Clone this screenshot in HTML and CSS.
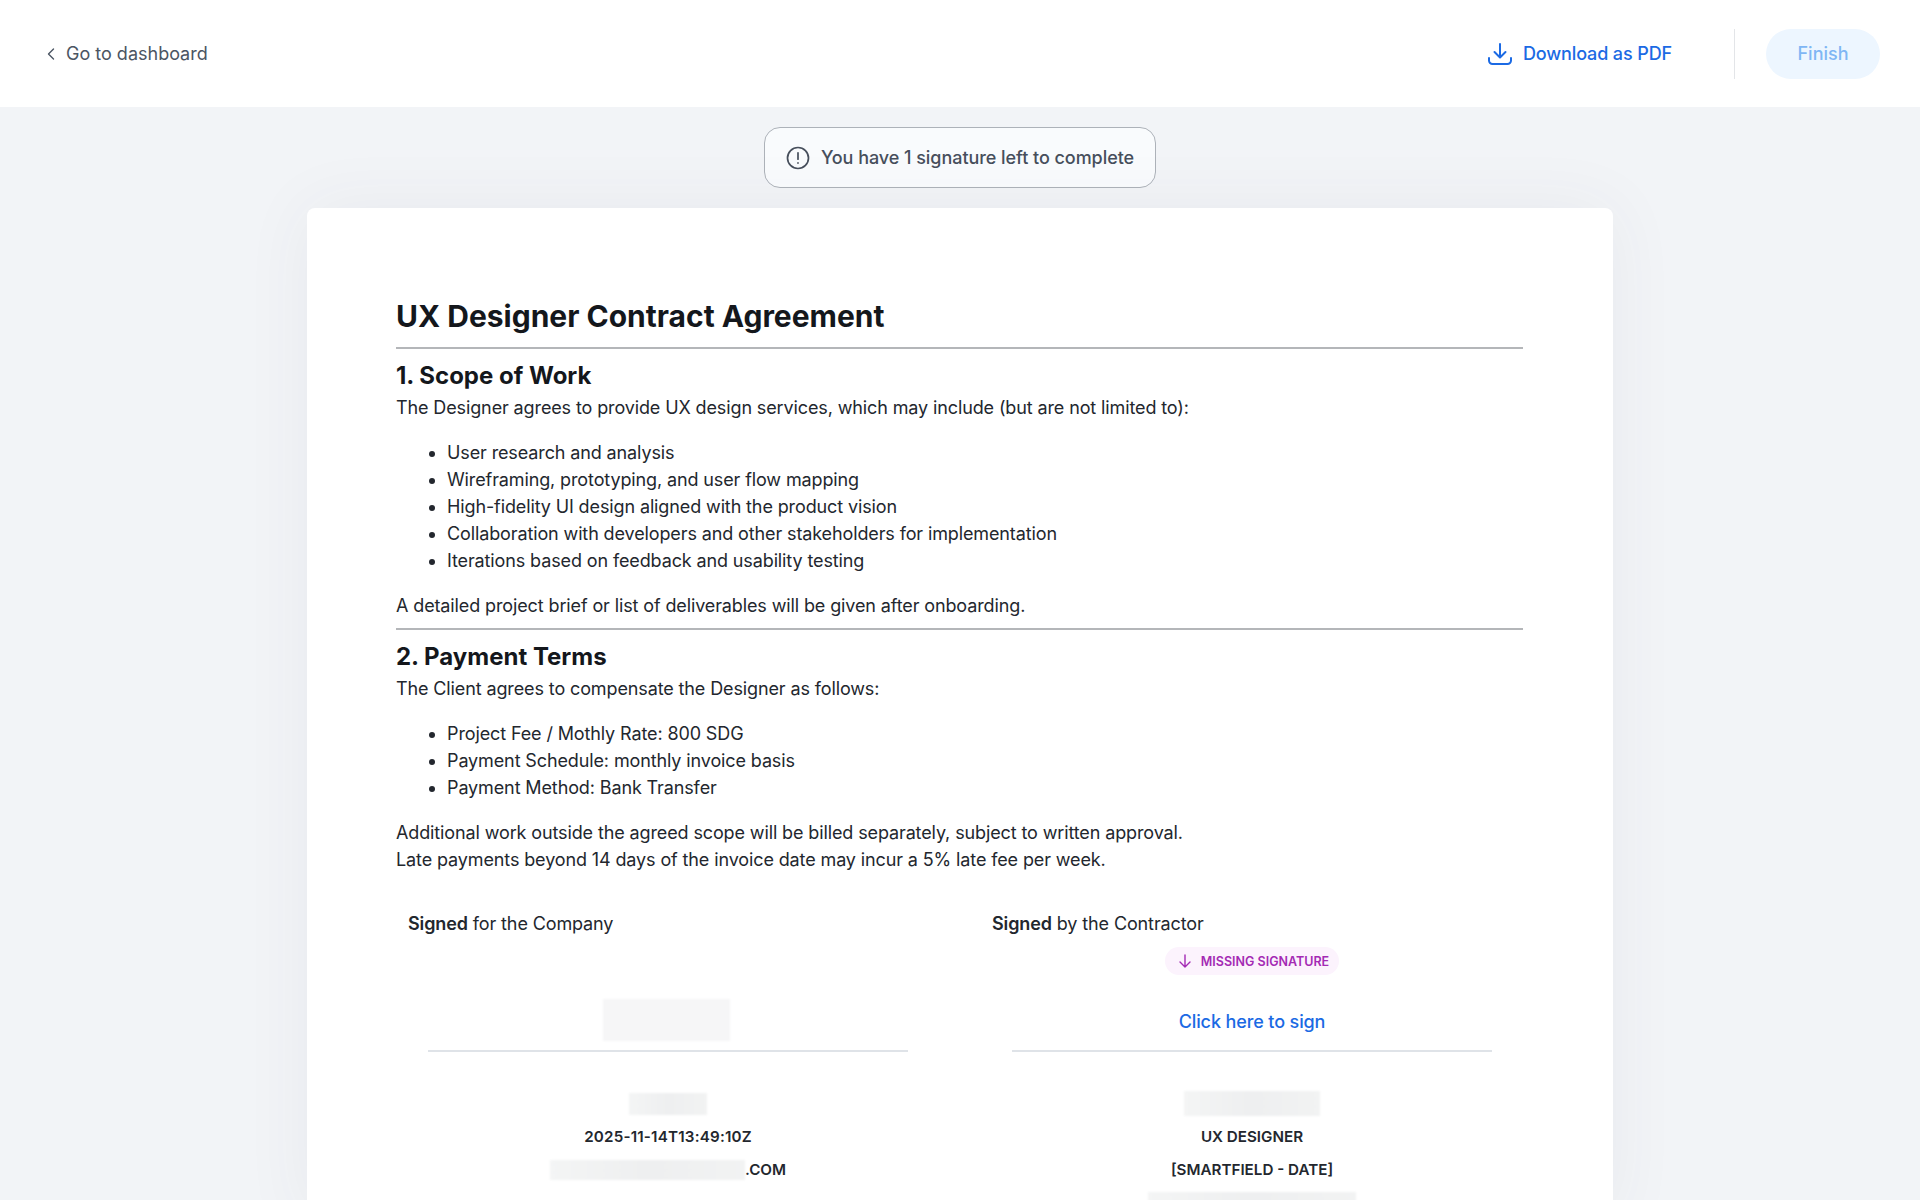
FILE: index.html

```html
<!DOCTYPE html>
<html lang="en">
<head>
  <meta charset="UTF-8" />
  <meta name="viewport" content="width=device-width, initial-scale=1.0"/>
  <title>UX Designer Contract Agreement</title>
  <link rel="stylesheet" href="styles.css">
</head>
<body>
<header class="topbar">
  <a class="back-link" href="#">
    <svg class="back-icon" viewBox="0 0 10 14" width="10" height="14" fill="none" stroke="currentColor" stroke-width="1.4" stroke-linecap="round" stroke-linejoin="round"><path d="M7.5 2 2.5 7l5 5"/></svg>
    Go to dashboard
  </a>
  <div class="topbar-actions">
    <a class="download-link" href="#">
      <svg viewBox="0 0 26 24" width="26" height="24" fill="none" stroke="currentColor" stroke-width="2" stroke-linecap="round" stroke-linejoin="round"><path d="M13 2v13M7.5 10l5.5 5.500 5.500-5.500M2 16v2.500A3.500 3.500 0 0 0 5.500 22h15a3.500 3.500 0 0 0 3.500-3.500V16"/></svg>
      Download as PDF
    </a>
    <span class="divider"></span>
    <button class="finish-btn">Finish</button>
  </div>
</header>

<main class="page">
  <div class="notice">
    <svg viewBox="0 0 24 24" width="24" height="24" fill="none" stroke="currentColor" stroke-width="1.700" stroke-linecap="round"><circle cx="12" cy="12" r="10.500"/><path d="M12 6.800v6.400M12 16.900v.2"/></svg>
    You have 1 signature left to complete
  </div>

  <article class="sheet">
    <h1>UX Designer Contract Agreement</h1>
    <hr>
    <h2>1. Scope of Work</h2>
    <p>The Designer agrees to provide UX design services, which may include (but are not limited to):</p>
    <ul>
      <li>User research and analysis</li>
      <li>Wireframing, prototyping, and user flow mapping</li>
      <li>High-fidelity UI design aligned with the product vision</li>
      <li>Collaboration with developers and other stakeholders for implementation</li>
      <li>Iterations based on feedback and usability testing</li>
    </ul>
    <p>A detailed project brief or list of deliverables will be given after onboarding.</p>
    <hr>
    <h2>2. Payment Terms</h2>
    <p>The Client agrees to compensate the Designer as follows:</p>
    <ul>
      <li>Project Fee / Mothly Rate: 800 SDG</li>
      <li>Payment Schedule: monthly invoice basis</li>
      <li>Payment Method: Bank Transfer</li>
    </ul>
    <p>Additional work outside the agreed scope will be billed separately, subject to written approval.<br>Late payments beyond 14 days of the invoice date may incur a 5% late fee per week.</p>

    <section class="signatures">
      <div class="sign-col">
        <div class="sign-title"><strong>Signed</strong> for the Company</div>
        <div class="sign-box">
          <span class="blur blur-sig"></span>
        </div>
        <div class="sign-meta">
          <div class="meta-row"><span class="blur blur-name"></span></div>
          <div class="meta-row meta-date">2025-11-14T13:49:10Z</div>
          <div class="meta-row"><span class="blur blur-mail"></span>.COM</div>
        </div>
      </div>
      <div class="sign-col">
        <div class="sign-title"><strong>Signed</strong> by the Contractor</div>
        <div class="sign-box">
          <span class="missing">
            <svg viewBox="0 0 16 16" width="16" height="16" fill="none" stroke="currentColor" stroke-width="1.400" stroke-linecap="round" stroke-linejoin="round"><path d="M8 2v12M3 9l5 5 5-5"/></svg>
            MISSING SIGNATURE
          </span>
          <a class="sign-link" href="#">Click here to sign</a>
        </div>
        <div class="sign-meta">
          <div class="meta-row"><span class="blur blur-title"></span></div>
          <div class="meta-row">UX DESIGNER</div>
          <div class="meta-row">[SMARTFIELD - DATE]</div>
          <div class="meta-row"><span class="blur blur-mail2"></span></div>
        </div>
      </div>
    </section>
  </article>
</main>
</body>
</html>
```

FILE: styles.css

```css
* {
  box-sizing: border-box;
}
html, body {
  height: 100%;
}
body {
  margin: 0;
  display: flex;
  flex-direction: column;
  overflow: hidden;
  font-family: Inter, "Liberation Sans", sans-serif;
  font-size: 18px;
  line-height: 27px;
  letter-spacing: -0.12px;
  color: #23272e;
  background: #f2f4f7;
}
a {
  text-decoration: none;
}

/* top bar */
.topbar {
  flex: none;
  height: 107px;
  display: flex;
  align-items: center;
  justify-content: space-between;
  padding: 0 40px 0 46px;
  background: #fff;
}
.back-link {
  display: flex;
  align-items: center;
  gap: 10px;
  letter-spacing: 0;
  color: #4b5563;
}
.topbar-actions {
  display: flex;
  align-items: center;
}
.download-link {
  display: flex;
  align-items: center;
  gap: 10px;
  font-weight: 500;
  color: #1b6ae4;
}
.divider {
  width: 1px;
  height: 50px;
  margin: 0 31px 0 62px;
  background: #e3e5e8;
}
.finish-btn {
  width: 114px;
  height: 50px;
  border: 0;
  border-radius: 25px;
  background: #edf6ff;
  color: #7fb6f4;
  font: 500 18px Inter, sans-serif;
}

/* page */
.page {
  flex: 1;
  min-height: 0;
  display: flex;
  flex-direction: column;
  align-items: center;
  padding-top: 20px;
}
.notice {
  flex: none;
  width: 392px;
  height: 61px;
  display: flex;
  align-items: center;
  justify-content: center;
  gap: 11px;
  border: 1.500px solid #adb2b9;
  border-radius: 16px;
  background: #f9fbfd;
  color: #474f5c;
  font-weight: 500;
  letter-spacing: -0.05px;
}
.sheet {
  flex: none;
  width: 1306px;
  margin-top: 20px;
  padding: 87px 90px 0 89px;
  border-radius: 8px;
  background: #fff;
  box-shadow: 0 0 70px rgba(60, 70, 90, 0.06);
}
h1 {
  margin: 0;
  font-size: 30px;
  line-height: 42px;
  font-weight: 700;
  letter-spacing: 0;
  color: #14171c;
}
h2 {
  margin: 0;
  font-size: 24px;
  line-height: 30px;
  font-weight: 700;
  letter-spacing: 0;
  color: #14171c;
}
hr {
  height: 2px;
  margin: 10px 0 12px;
  border: 0;
  background: #b4b6b9;
}
p + hr {
  margin-top: 9px;
}
p {
  margin: 3px 0 0;
}
ul {
  margin: 18px 0;
  padding-left: 51px;
}

/* signatures */
.signatures {
  display: grid;
  grid-template-columns: 544px 544px;
  column-gap: 40px;
  margin-top: 37px;
}
.sign-title {
  padding-left: 12px;
}
.sign-title strong {
  font-weight: 600;
}
.sign-box {
  height: 115px;
  margin: 0 32px;
  display: flex;
  flex-direction: column;
  align-items: center;
  justify-content: flex-end;
  padding-bottom: 15px;
  border-bottom: 2px solid #dfe3e8;
}
.missing {
  display: flex;
  align-items: center;
  gap: 8px;
  height: 28px;
  margin-bottom: 33px;
  padding: 0 10px 0 12px;
  border-radius: 14px;
  background: #fcf3fd;
  color: #a42bb4;
  font-size: 12.500px;
  font-weight: 600;
  letter-spacing: 0;
}
.sign-link {
  color: #1b6ae4;
  font-weight: 500;
}
.sign-meta {
  margin-top: 35px;
  text-align: center;
  font-size: 15.200px;
  font-weight: 600;
  letter-spacing: 0;
  color: #23272e;
}
.meta-row {
  height: 33px;
  display: flex;
  align-items: center;
  justify-content: center;
}
.meta-date {
  letter-spacing: 0.18px;
}
.blur {
  display: block;
  background: linear-gradient(90deg, #f4f5f5, #eeeff0 50%, #f2f3f3);
  filter: blur(1px);
}
.blur-sig {
  width: 127px;
  height: 42px;
  margin: 0 0 -6px -4px;
  background: #f6f6f7;
}
.blur-name {
  width: 78px;
  height: 22px;
}
.blur-mail {
  width: 195px;
  height: 20px;
}
.blur-title {
  width: 136px;
  height: 25px;
}
.blur-mail2 {
  width: 208px;
  height: 22px;
}
```
